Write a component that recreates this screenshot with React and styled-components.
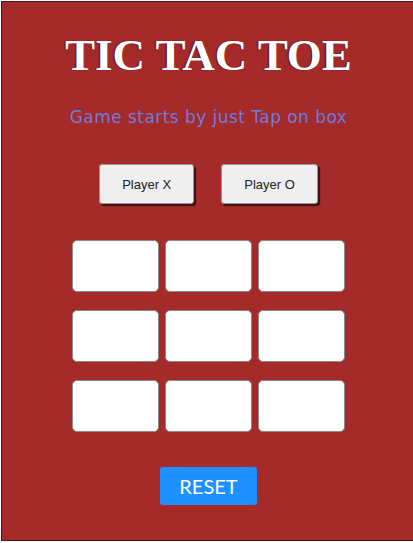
import React, { useState } from 'react';
import styled, { createGlobalStyle } from 'styled-components';

const GlobalStyle = createGlobalStyle`
    body {
        margin: 0;
        padding: 1px 0 0 1px;
        background: #ffffff;
        overflow: hidden;
    }
`;

export default function App() {
    const [board, setBoard] = useState(Array(9).fill(''));
    const [player, setPlayer] = useState('X');

    const handleTap = (index) => {
        if (board[index]) return;
        const next = [...board];
        next[index] = player;
        setBoard(next);
        setPlayer(player === 'X' ? 'O' : 'X');
    };

    const rows = [0, 1, 2];

    return (
        <>
            <GlobalStyle />
            <GameContainer>
                <Title>TIC TAC TOE</Title>
                <SubTitle>Game starts by just Tap on box</SubTitle>
                <PlayerRow>
                    <PlayerButton onClick={() => setPlayer('X')}>Player X</PlayerButton>
                    <PlayerButton onClick={() => setPlayer('O')}>Player O</PlayerButton>
                </PlayerRow>
                <Board>
                    {rows.map((row) => (
                        <BoardRow key={row}>
                            {rows.map((col) => {
                                const index = row * 3 + col;
                                return (
                                    <Cell key={index} onClick={() => handleTap(index)}>
                                        {board[index]}
                                    </Cell>
                                );
                            })}
                        </BoardRow>
                    ))}
                </Board>
                <ResetButton onClick={() => setBoard(Array(9).fill(''))}>RESET</ResetButton>
            </GameContainer>
        </>
    );
}

const GameContainer = styled.div`
    box-sizing: border-box;
    width: 415px;
    height: 540px;
    background-color: #a52a2a;
    border: 1px solid #4a1414;
    display: flex;
    flex-direction: column;
    align-items: center;
`;
const Title = styled.h1`
    margin: 27px 0 0 0;
    font-family: 'Liberation Serif', 'Times New Roman', serif;
    font-size: 45px;
    font-weight: bold;
    color: #ffffff;
    text-shadow: -1px 0 1px #4a1030;
`;
const SubTitle = styled.div`
    margin-top: 26px;
    font-family: 'DejaVu Sans', Verdana, sans-serif;
    font-size: 17px;
    letter-spacing: 0.45px;
    color: #6d7ddb;
`;
const PlayerRow = styled.div`
    display: flex;
    gap: 27px;
    margin-top: 37px;
`;
const PlayerButton = styled.button`
    height: 40px;
    padding: 0 22px;
    font-family: 'Liberation Sans', Arial, sans-serif;
    font-size: 13px;
    color: #222222;
    background: #efefef;
    border: 1px solid #999999;
    border-radius: 3px;
    box-shadow: 2px 2px 1px #3a1010;
    cursor: pointer;
`;
const Board = styled.div`
    display: flex;
    flex-direction: column;
    gap: 18px;
    margin-top: 36px;
`;
const BoardRow = styled.div`
    display: flex;
    gap: 6px;
`;
const Cell = styled.div`
    box-sizing: border-box;
    width: 87px;
    height: 52px;
    background: #ffffff;
    border: 1px solid #8a8a8a;
    border-radius: 5px;
    display: flex;
    align-items: center;
    justify-content: center;
    font-family: 'Liberation Sans', Arial, sans-serif;
    font-size: 28px;
    color: #a52a2a;
    cursor: pointer;
`;
const ResetButton = styled.button`
    margin-top: 35px;
    width: 97px;
    height: 38px;
    background: #1e90ff;
    color: #ffffff;
    border: none;
    border-radius: 3px;
    font-family: Lato, 'Open Sans', sans-serif;
    font-size: 20px;
    cursor: pointer;
`;
